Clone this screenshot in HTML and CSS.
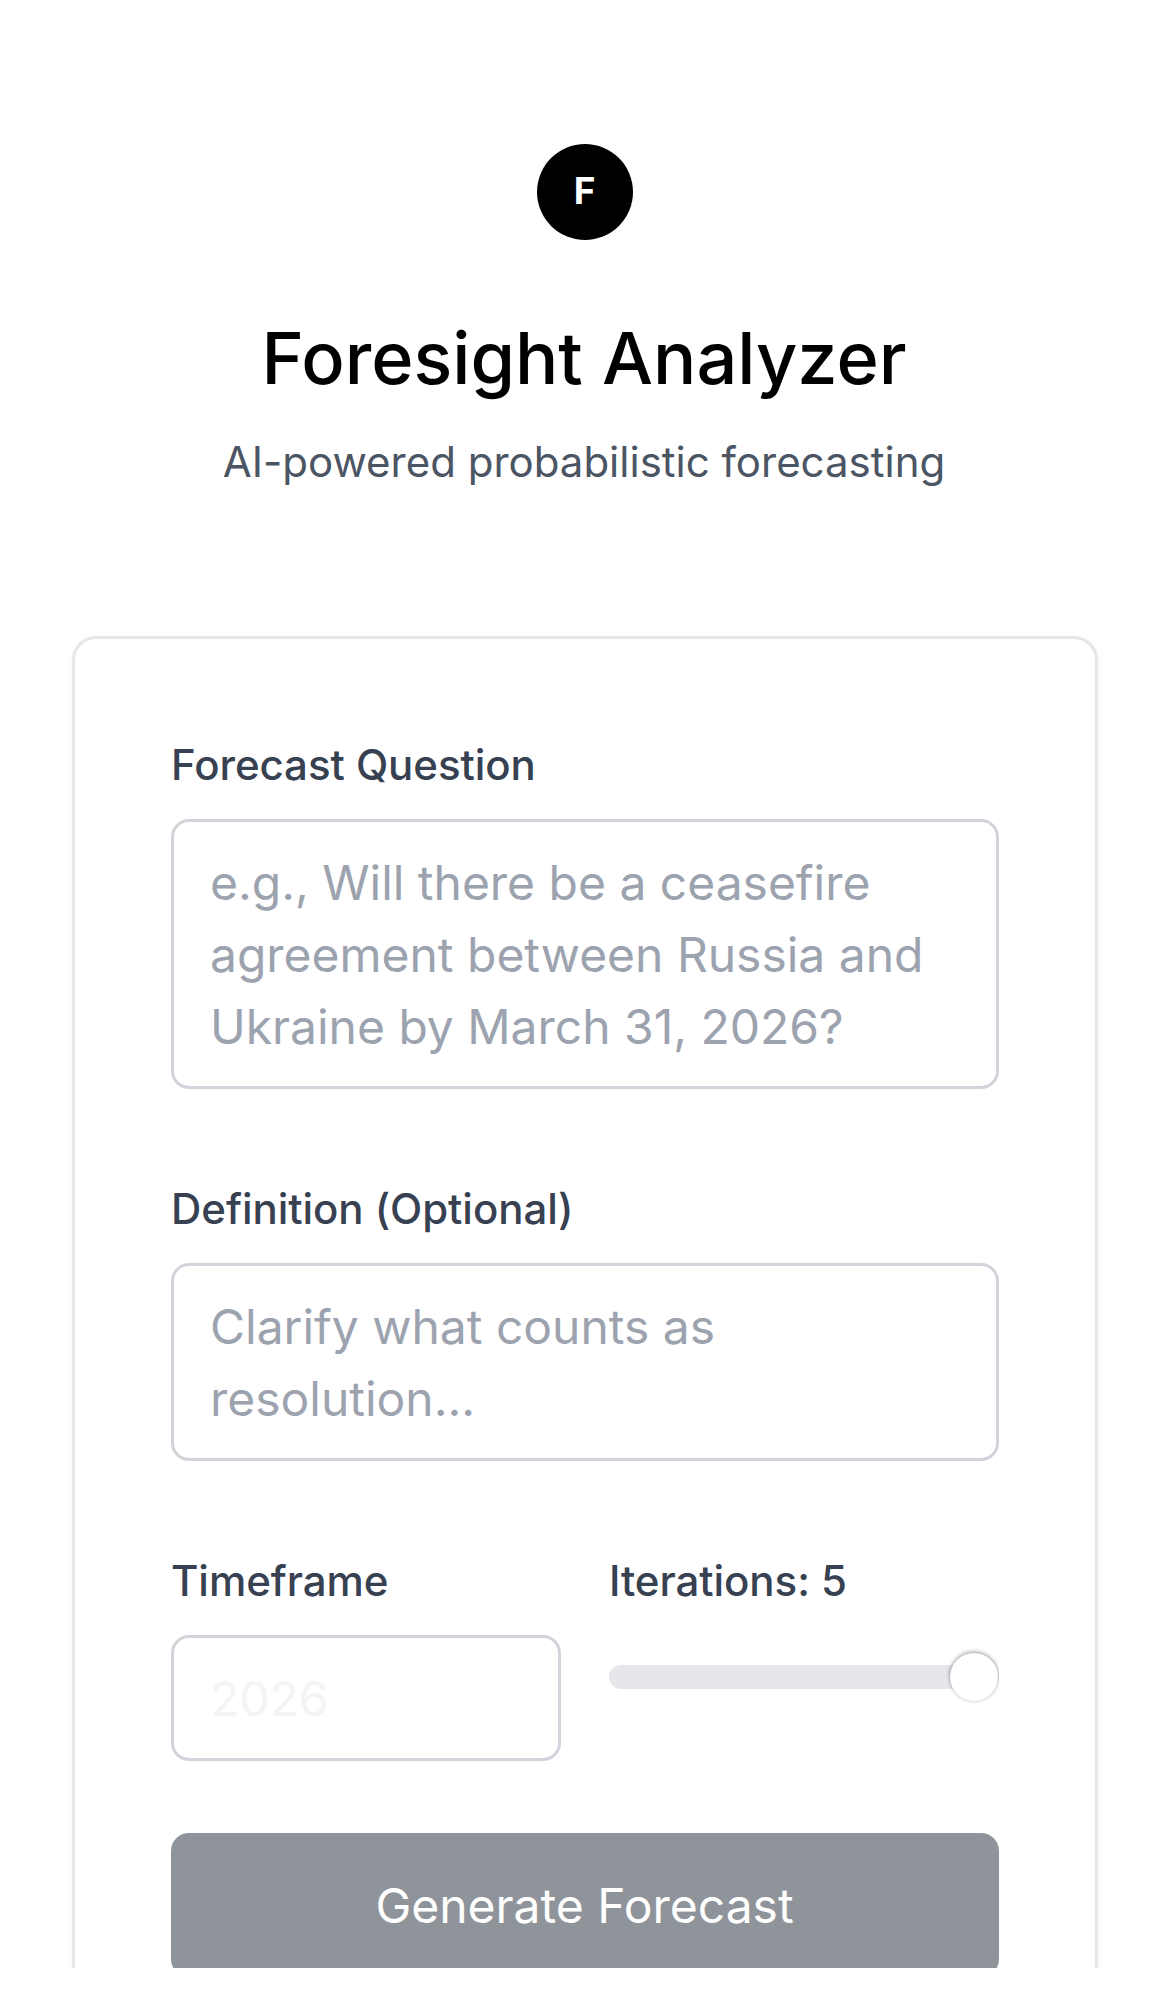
FILE: index.html
```html
<!DOCTYPE html>
<html lang="en">
<head>
  <meta charset="utf-8">
  <title>Foresight Analyzer</title>
  <link rel="stylesheet" href="styles.css">
</head>
<body>
  <div class="viewport">
    <main class="page">
      <header class="hero">
        <div class="logo">F</div>
        <h1 class="title">Foresight Analyzer</h1>
        <p class="subtitle">AI-powered probabilistic forecasting</p>
      </header>
      <section class="card">
        <div class="field">
          <div class="label" id="question-label">Forecast Question</div>
          <div class="input" role="textbox" aria-labelledby="question-label">e.g., Will there be a ceasefire agreement between Russia and Ukraine by March 31, 2026?</div>
        </div>
        <div class="field">
          <div class="label" id="definition-label">Definition (Optional)</div>
          <div class="input" role="textbox" aria-labelledby="definition-label">Clarify what counts as resolution...</div>
        </div>
        <div class="row">
          <div class="field">
            <div class="label" id="timeframe-label">Timeframe</div>
            <div class="input input-faint" role="textbox" aria-labelledby="timeframe-label">2026</div>
          </div>
          <div class="field">
            <div class="label" id="iterations-label">Iterations: 5</div>
            <div class="slider" role="slider" aria-labelledby="iterations-label" aria-valuemin="1" aria-valuemax="5" aria-valuenow="5">
              <div class="slider-thumb"></div>
            </div>
          </div>
        </div>
        <button class="submit" type="button" disabled>Generate Forecast</button>
      </section>
    </main>
  </div>
</body>
</html>
```
FILE: styles.css
```css
* {
  box-sizing: border-box;
}

body {
  margin: 0;
  background: #fff;
  font-family: Inter, "Liberation Sans", sans-serif;
}

.viewport {
  height: 1968px;
  overflow: hidden;
}

.page {
  padding: 144px 72px;
}

.hero {
  display: flex;
  flex-direction: column;
  align-items: center;
  margin-bottom: 144px;
}

.logo {
  display: flex;
  align-items: center;
  justify-content: center;
  width: 96px;
  height: 96px;
  margin-bottom: 73px;
  padding: 0 1px 3px 0;
  border-radius: 50%;
  background: #000;
  color: #fff;
  font-size: 37px;
  font-weight: 700;
}

.title {
  margin: 0 0 29px;
  padding-right: 2px;
  color: #000;
  font-size: 72px;
  font-weight: 500;
  line-height: 90px;
}

.subtitle {
  margin: 0;
  padding-right: 2px;
  color: #4b5563;
  font-size: 42px;
  line-height: 60px;
}

.card {
  display: flex;
  flex-direction: column;
  gap: 90px;
  padding: 96px;
  border: 3px solid #e5e7eb;
  border-radius: 24px;
  background: #fff;
  box-shadow: 0 3px 6px rgba(0, 0, 0, 0.05);
}

.field {
  display: flex;
  flex-direction: column;
  gap: 24px;
}

.label {
  color: #374151;
  font-size: 42px;
  font-weight: 500;
  line-height: 60px;
  letter-spacing: -0.05px;
}

.input {
  padding: 25px 36px 23px;
  border: 3px solid #d1d5db;
  border-radius: 18px;
  background: #fff;
  color: #9ca3af;
  font-size: 48px;
  line-height: 72px;
  letter-spacing: -0.02px;
}

.input-faint {
  color: #f3f4f6;
}

.row {
  display: grid;
  grid-template-columns: 1fr 1fr;
  gap: 48px;
}

.slider {
  display: flex;
  align-items: center;
  justify-content: flex-end;
  height: 24px;
  margin-top: 30px;
  padding-right: 1px;
  border-radius: 12px;
  background: #e5e7eb;
}

.slider-thumb {
  flex: none;
  width: 48px;
  height: 48px;
  border-radius: 50%;
  background: #fff;
  box-shadow: 0 -1px 4px rgba(0, 0, 0, 0.42);
  clip-path: inset(-6px -1px -6px -6px);
}

.submit {
  height: 144px;
  margin-top: -18px;
  padding: 2px 1px 0 0;
  border: 0;
  border-radius: 18px;
  background: #8f949b;
  color: #fff;
  font: 400 48px/72px Inter, "Liberation Sans", sans-serif;
}
```
